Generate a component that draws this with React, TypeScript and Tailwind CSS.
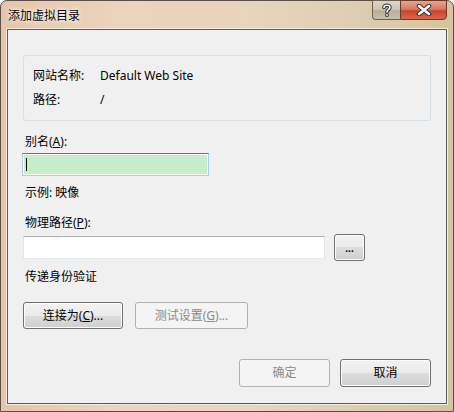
import React from 'react';

// Win7 风格按钮
function Btn({ children, disabled, className = '' }: { children: React.ReactNode; disabled?: boolean; className?: string }) {
  if (disabled) {
    return (
      <div className={`flex items-center justify-center rounded-[3px] border border-[#adb2b5] bg-[#f4f4f4] text-[#8a8a8a] ${className}`}>
        {children}
      </div>
    );
  }
  return (
    <div
      className={`flex items-center justify-center rounded-[3px] border border-[#707070] text-black shadow-[inset_0_0_0_1px_#fcfcfc] bg-[linear-gradient(#f2f2f2_0%,#ebebeb_50%,#dddddd_50%,#cfcfcf_100%)] ${className}`}
    >
      {children}
    </div>
  );
}

export default function App() {
  return (
    <div className="w-[454px] h-[412px] overflow-hidden font-['Segoe_UI','Noto_Sans','Noto_Sans_CJK_SC',sans-serif] text-[12px] leading-[16px] text-black">
      <div className="flex flex-col w-full h-full rounded-t-[7px] border border-[#5a5046] bg-[linear-gradient(90deg,#e6c5a9_0%,#ecd3bd_25%,#e8d4bf_55%,#ddcdb0_80%,#d4c49e_100%)]">
        {/* 标题栏 */}
        <div className="flex h-[28px] items-start justify-between">
          <div className="pl-[7px] pt-[7px] text-[12px] [text-shadow:0_0_6px_#fff,0_0_3px_#fff]">添加虚拟目录</div>
          <div className="flex mr-[6px] -mt-px">
            <div className="flex h-[20px] w-[28px] items-center justify-center rounded-bl-[4px] border border-[#6b5f50] border-r-0 bg-[linear-gradient(#ddd6c8_0%,#cfc6b4_45%,#b8ae98_55%,#c9c0ac_100%)]">
              <svg width="12" height="14" viewBox="0 0 12 14">
                <path d="M3 4.5 C3 1.5 9 1.5 9 4.5 C9 6.5 6 6.5 6 9" fill="none" stroke="#333" strokeWidth="3.6" strokeLinecap="round" />
                <circle cx="6" cy="12" r="1.9" fill="#333" />
                <path d="M3 4.5 C3 1.5 9 1.5 9 4.5 C9 6.5 6 6.5 6 9" fill="none" stroke="#fff" strokeWidth="1.6" strokeLinecap="round" />
                <circle cx="6" cy="12" r="0.9" fill="#fff" />
              </svg>
            </div>
            <div className="flex h-[20px] w-[47px] items-center justify-center rounded-br-[4px] border border-[#6b3a2c] bg-[linear-gradient(#e8a38e_0%,#dc7a62_45%,#c8452d_55%,#d66a4c_100%)]">
              <svg width="16" height="12" viewBox="0 0 16 12">
                <path d="M3 2 L13 10 M13 2 L3 10" stroke="#333" strokeWidth="4.5" strokeLinecap="round" />
                <path d="M3 2 L13 10 M13 2 L3 10" stroke="#fff" strokeWidth="2.5" strokeLinecap="round" />
              </svg>
            </div>
          </div>
        </div>

        {/* 客户区 */}
        <div className="mx-[6px] mb-[7px] flex-1 border border-[#5c5c5c] bg-[#f0f0f0] px-[15px] shadow-[0_0_0_1px_#f4ece2]">
          <div className="mt-[25px] h-[66px] rounded-[3px] border border-[#d5dfe5] pl-[9px] pt-[8px]">
            <div className="flex h-[24px] items-center">
              <span className="w-[67px]">网站名称:</span>
              <span>Default Web Site</span>
            </div>
            <div className="flex h-[24px] items-center">
              <span className="w-[67px]">路径:</span>
              <span>/</span>
            </div>
          </div>

          <div className="mt-[13px] pl-[2px]">
            别名(<u>A</u>):
          </div>
          <div className="mt-[3px] -ml-px h-[23px] w-[187px] border border-[#a7cdf0] border-t-[#3c7fb1] bg-white p-px">
            <div className="flex h-full items-center bg-[#c8ebc8] pl-[2px]">
              <div className="h-[13px] w-px bg-black" />
            </div>
          </div>

          <div className="mt-[9px] pl-[2px]">示例: 映像</div>

          <div className="mt-[14px] pl-[2px]">
            物理路径(<u>P</u>):
          </div>
          <div className="mt-[3px] flex h-[27px] items-center">
            <div className="h-[23px] w-[302px] border border-[#e2e3ea] border-t-[#abadb3] border-b-[#e3e9ef] bg-white" />
            <Btn className="ml-[9px] h-[27px] w-[31px] text-[10px] font-bold text-[#2a4a7a]">...</Btn>
          </div>

          <div className="mt-[8px] pl-[2px]">传递身份验证</div>

          <div className="mt-[17px] flex gap-[12px]">
            <Btn className="h-[27px] w-[100px]">
              连接为(<u>C</u>)...
            </Btn>
            <Btn disabled className="h-[27px] w-[113px]">
              测试设置(<u>G</u>)...
            </Btn>
          </div>

          <div className="mt-[30px] flex justify-end gap-[10px]">
            <Btn disabled className="h-[28px] w-[91px]">
              确定
            </Btn>
            <Btn className="h-[28px] w-[91px]">取消</Btn>
          </div>
        </div>
      </div>
    </div>
  );
}
